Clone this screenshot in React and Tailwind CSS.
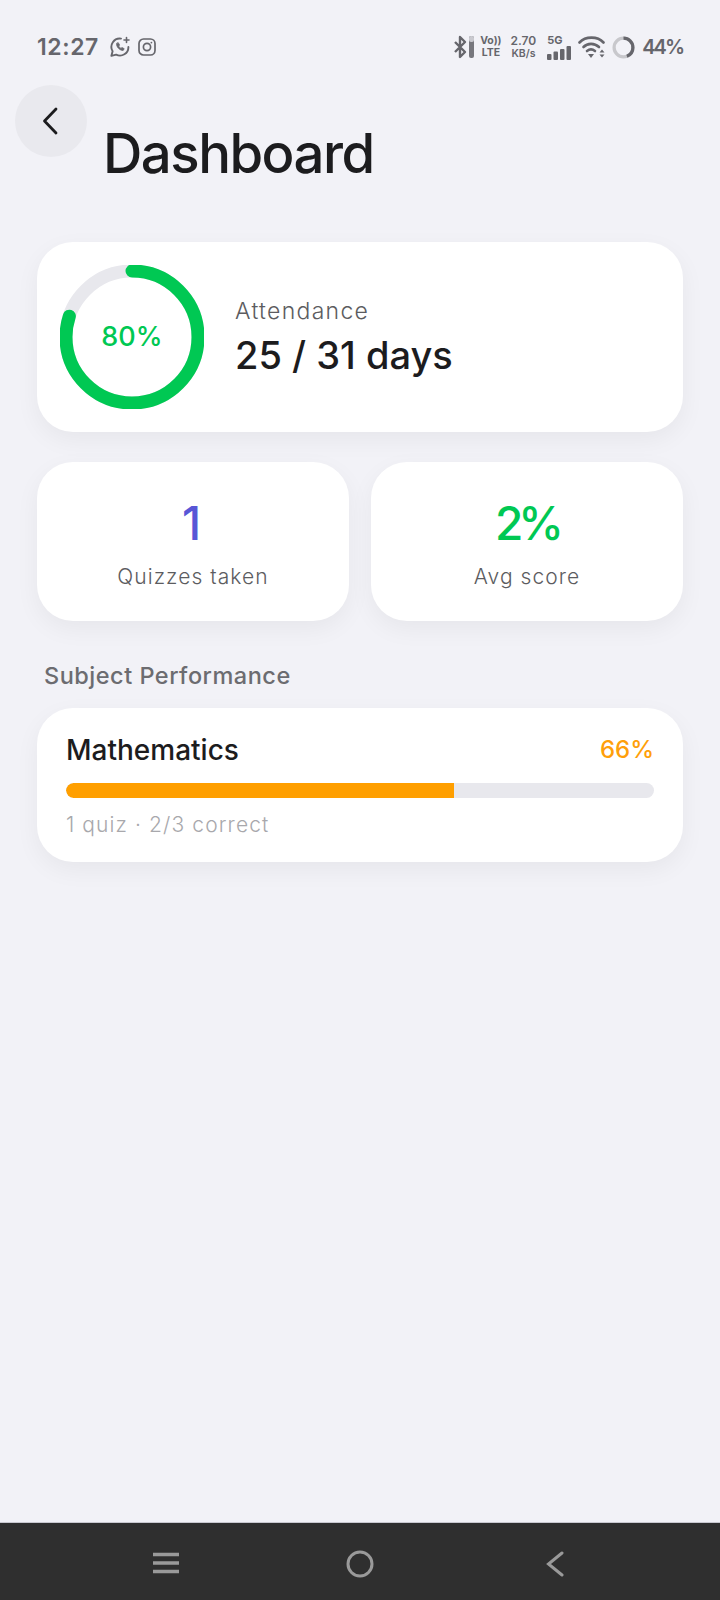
import React from 'react';

const FONT = { fontFamily: 'Inter, "Noto Sans", sans-serif' };

function WhatsappIcon() {
  return (
    <svg width="22" height="22" viewBox="0 0 22 22" fill="none" stroke="#66666c" strokeWidth="1.9" strokeLinecap="round" strokeLinejoin="round">
      <path d="M12 2.6A8.4 8.4 0 0 0 3.6 15.2L2.4 19.8l4.7-1.2A8.4 8.4 0 0 0 19.4 11" />
      <path d="M7.6 7.6c-.6 3 3 7 6.6 6.8l1-1.7-2.2-1.2-1 .9c-1-.4-1.8-1.2-2.3-2.3l.9-1-1.2-2.2z" fill="#66666c" strokeWidth="0.8" />
      <path d="M17.5 1.5v5M15 4h5" strokeWidth="1.6" />
    </svg>
  );
}

function InstagramIcon() {
  return (
    <svg width="18" height="18" viewBox="0 0 18 18" fill="none" stroke="#66666c" strokeWidth="1.7">
      <rect x="1" y="1" width="16" height="16" rx="4.5" />
      <circle cx="9" cy="9" r="3.6" />
      <circle cx="13.4" cy="4.6" r="0.9" fill="#66666c" stroke="none" />
    </svg>
  );
}

function BluetoothIcon() {
  return (
    <svg width="24" height="24" viewBox="0 0 24 24" fill="none">
      <path d="M2 7l10 10-5 5V2l5 5L2 17" stroke="#66666c" strokeWidth="2.400" strokeLinejoin="round" />
      <rect x="16" y="1" width="5" height="22" rx="2" fill="#77777d" />
      <rect x="16" y="1" width="5" height="6" rx="2" fill="#c9c9cf" />
    </svg>
  );
}

function SignalIcon() {
  return (
    <svg width="24" height="14" viewBox="0 0 24 14" fill="#66666c">
      <rect x="0" y="8" width="4.500" height="6" rx="1" />
      <rect x="6.500" y="5.500" width="4.500" height="8.500" rx="1" />
      <rect x="13" y="3" width="4.500" height="11" rx="1" />
      <rect x="19.500" y="0" width="4.500" height="14" rx="1" />
    </svg>
  );
}

function WifiIcon() {
  return (
    <svg width="28" height="24" viewBox="0 0 28 24" fill="none" stroke="#66666c" strokeWidth="2.600" strokeLinecap="round">
      <path d="M1.500 7.500C7.500 1 19.500 1 25.500 7.500" />
      <path d="M5.500 12c4-4.200 11-4.200 15.500 0" />
      <path d="M9 16c2.500-2 5.500-2 8 0" />
      <path d="M10 19h6l-3 4z" fill="#66666c" stroke="none" />
      <path d="M21.500 17.500l2.500-3 2.500 3zM21.500 19.500l2.500 3 2.500-3z" fill="#66666c" stroke="none" />
    </svg>
  );
}

function BatteryRing() {
  return (
    <svg width="23" height="23" viewBox="0 0 24 24" fill="none" strokeWidth="3.400">
      <circle cx="12" cy="12" r="9.800" stroke="#c8c8cc" />
      <circle cx="12" cy="12" r="9.800" stroke="#66666c" strokeDasharray="27 62" transform="rotate(-90 12 12)" />
    </svg>
  );
}

function StatusBar() {
  return (
    <div className="h-[85px] flex items-start justify-between pl-[37px] pr-[37px] pt-[35px] text-[#66666c]">
      <div className="flex items-center h-6">
        <span className="text-[23px] font-semibold tracking-[0.600px] w-[72px]">12:27</span>
        <WhatsappIcon />
        <span className="ml-[7px]"><InstagramIcon /></span>
      </div>
      <div className="flex items-center h-6">
        <BluetoothIcon />
        <div className="ml-[3px] flex flex-col items-center text-[10.500px] leading-[12px] font-bold">
          <span>Vo))</span>
          <span>LTE</span>
        </div>
        <div className="ml-[9px] flex flex-col items-center text-[12px] leading-[13px] font-semibold">
          <span>2.70</span>
          <span className="text-[10.500px]">KB/s</span>
        </div>
        <div className="ml-[11px] flex flex-col items-start">
          <span className="text-[11px] leading-[11px] font-bold">5G</span>
          <SignalIcon />
        </div>
        <span className="ml-[7px]"><WifiIcon /></span>
        <span className="ml-[6px]"><BatteryRing /></span>
        <span className="ml-[7px] text-[20px] font-semibold tracking-[-2px]">44%</span>
      </div>
    </div>
  );
}

function Header() {
  return (
    <div className="flex items-start pl-[15px]">
      <button type="button" className="w-[72px] h-[72px] rounded-full bg-[#e9e9ee] flex items-center justify-center">
        <svg width="20" height="30" viewBox="0 0 20 30" fill="none" stroke="#1c1c1e" strokeWidth="2.800" strokeLinecap="round" strokeLinejoin="round">
          <path d="M15 3 3.500 15 15 27" />
        </svg>
      </button>
      <h1 className="ml-[16px] mt-[34px] text-[54.500px] leading-[68px] font-[550] tracking-[-1.500px] text-[#1c1c1e]">Dashboard</h1>
    </div>
  );
}

function AttendanceRing({ percent }) {
  const r = 66;
  const c = 2 * Math.PI * r;
  return (
    <div className="relative w-[144px] h-[144px] shrink-0">
      <svg width="144" height="144" viewBox="0 0 144 144" fill="none" strokeWidth="13">
        <circle cx="72" cy="72" r={r} stroke="#e8e8ed" />
        <circle
          cx="72"
          cy="72"
          r={r}
          stroke="#00c853"
          strokeLinecap="round"
          strokeDasharray={`${(c * percent) / 100} ${c}`}
          transform="rotate(-90 72 72)"
        />
      </svg>
      <span className="absolute inset-0 flex items-center justify-center text-[27px] font-medium text-[#00c853]">{percent}%</span>
    </div>
  );
}

function StatCard({ value, label, color }) {
  return (
    <div className="h-[159px] rounded-[36px] bg-white shadow-[0_8px_24px_rgba(0,0,0,0.05)] flex flex-col items-center pt-[33px]">
      <span className={`text-[46px] leading-[56px] font-medium ${color}`}>{value}</span>
      <span className="mt-[12px] text-[21px] leading-[28px] tracking-[1.050px] font-light text-[#5c5c60]">{label}</span>
    </div>
  );
}

export default function App() {
  return (
    <div className="w-[720px] h-[1600px] bg-[#f2f2f7] flex flex-col overflow-hidden" style={FONT}>
      <StatusBar />
      <Header />

      <div className="flex-1 px-[37px] pt-[55px]">
        <div className="h-[190px] rounded-[36px] bg-white shadow-[0_8px_24px_rgba(0,0,0,0.05)] flex items-center pl-[23px]">
          <AttendanceRing percent={80} />
          <div className="ml-[31px]">
            <p className="text-[23px] leading-[28px] tracking-[1.300px] font-light text-[#5c5c60]">Attendance</p>
            <p className="mt-[7px] text-[38px] leading-[46px] font-medium text-[#1c1c1e]">25 / 31 days</p>
          </div>
        </div>

        <div className="mt-[30px] grid grid-cols-2 gap-[22px]">
          <StatCard value="1" label="Quizzes taken" color="text-[#5856d6] pr-[3px]" />
          <StatCard value="2%" label="Avg score" color="text-[#00c853] tracking-[-5px]" />
        </div>

        <p className="mt-[40px] ml-[7px] text-[23.500px] leading-[30px] font-medium tracking-[0.500px] text-[#6c6c70]">Subject Performance</p>

        <div className="mt-[17px] h-[154px] rounded-[36px] bg-white shadow-[0_8px_24px_rgba(0,0,0,0.05)] px-[29px] pt-[24px]">
          <div className="flex items-center justify-between h-[36px]">
            <span className="text-[28px] font-medium text-[#1c1c1e]">Mathematics</span>
            <span className="text-[24px] font-medium text-[#ff9f0a]">66%</span>
          </div>
          <div className="mt-[15px] h-[15px] rounded-full bg-[#e8e8ed] overflow-hidden">
            <div className="h-full bg-[#ff9f00] rounded-l-full" style={{ width: '66%' }} />
          </div>
          <p className="mt-[13px] text-[21px] leading-[28px] tracking-[1.100px] font-light text-[#a8a8ac]">1 quiz · 2/3 correct</p>
        </div>
      </div>

      <div className="h-[78px] bg-[#2f2f2f] border-t border-[#c8c8d0] relative">
        <svg width="28" height="22" viewBox="0 0 28 22" className="absolute left-[152px] top-[29px]" fill="none" stroke="#9a9a9a" strokeWidth="3.400">
          <path d="M1 2.500h26M1 11h26M1 19.500h26" />
        </svg>
        <svg width="28" height="28" viewBox="0 0 28 28" className="absolute left-[346px] top-[27px]" fill="none" stroke="#9a9a9a" strokeWidth="3">
          <circle cx="14" cy="14" r="12" />
        </svg>
        <svg width="18" height="26" viewBox="0 0 18 26" className="absolute left-[546px] top-[28px]" fill="none" stroke="#9a9a9a" strokeWidth="3" strokeLinecap="round">
          <path d="M16 2 2.500 13 16 24" />
        </svg>
      </div>
    </div>
  );
}
